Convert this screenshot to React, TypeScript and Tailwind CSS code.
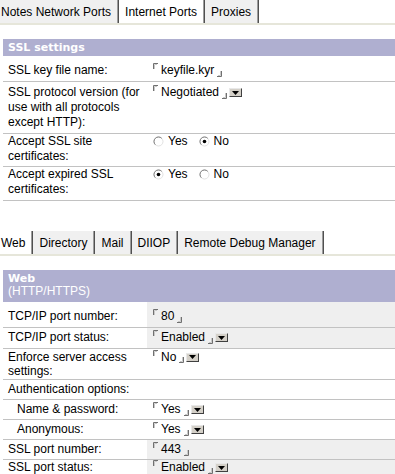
import * as React from "react";

function Tabs({ tabs, active }: { tabs: string[]; active: number }) {
  return (
    <div className="border-b-2 border-[#e6e6da]">
      <div className="-ml-[5px] flex h-[23px] items-stretch">
        {tabs.map((t, i) => (
          <div
            key={t}
            className={
              "mr-px flex items-center border-r border-r-[#9c9c9c] px-[6px] pt-px shadow-[1px_0_0_#505050] " +
              (i === active ? "bg-white" : "bg-[#f0f0f0]")
            }
          >
            {t}
          </div>
        ))}
      </div>
    </div>
  );
}

function MarkStart() {
  return (
    <svg width="5" height="6" viewBox="0 0 5 6" className="mr-[3px] shrink-0">
      <path d="M0.5 6V0.5H5" fill="none" stroke="#707070" />
      <path d="M1.5 6V1.5H4" fill="none" stroke="#c8c8c8" />
    </svg>
  );
}

function MarkEnd() {
  return (
    <svg width="5" height="6" viewBox="0 0 5 6" className="mb-px ml-[3px] shrink-0 self-end">
      <path d="M4.5 0V5.5H0" fill="none" stroke="#707070" />
      <path d="M3.5 0V4.5H1" fill="none" stroke="#c8c8c8" />
    </svg>
  );
}

function Drop() {
  return (
    <span className="ml-[2px] flex h-[9px] w-[13px] shrink-0 items-center justify-center self-center border border-[#404040] border-l-[#e8e8e8] border-t-[#e8e8e8] bg-[#d4d0c8]">
      <svg width="7" height="4" viewBox="0 0 7 4">
        <path d="M0 0H7L3.5 4Z" fill="#000" />
      </svg>
    </span>
  );
}

function Field({ value, drop }: { value: string; drop?: boolean }) {
  return (
    <div className="flex items-start">
      <MarkStart />
      <span>{value}</span>
      <MarkEnd />
      {drop ? <Drop /> : null}
    </div>
  );
}

function Radio({ checked }: { checked?: boolean }) {
  return (
    <svg width="11" height="11" viewBox="0 0 11 11" className="shrink-0">
      <circle cx="5.5" cy="5.5" r="4.5" fill="#fff" stroke="#e2e2e2" />
      <path d="M2.3 8.7A4.5 4.5 0 0 1 8.7 2.3" fill="none" stroke="#7c7c7c" />
      {checked ? <circle cx="5.5" cy="5.5" r="1.8" fill="#000" /> : null}
    </svg>
  );
}

function YesNo({ yes }: { yes: boolean }) {
  return (
    <div className="flex items-center">
      <Radio checked={yes} />
      <span className="ml-[4px]">Yes</span>
      <span className="ml-[11px]">
        <Radio checked={!yes} />
      </span>
      <span className="ml-[4px]">No</span>
    </div>
  );
}

interface RowProps {
  label: string;
  h: string;
  pad: string;
  lh?: string;
  gray?: boolean;
  indent?: boolean;
  children?: React.ReactNode;
}

function Row({ label, h, pad, lh = "leading-[15px]", gray, indent, children }: RowProps) {
  return (
    <div className={"flex border-b border-[#c2c2c2] " + h}>
      <div className={"w-[144px] shrink-0 " + pad + " " + lh + " " + (indent ? "pl-[14px]" : "pl-[5px]")}>
        {label}
      </div>
      <div className={"flex-1 pl-[6px] " + pad + " " + lh + " " + (gray ? "bg-[#efefef]" : "")}>
        {children}
      </div>
    </div>
  );
}

export default function App() {
  return (
    <div className="h-[474px] w-[395px] overflow-hidden bg-white font-['Liberation_Sans',Arial,sans-serif] text-[12px] text-black">
      <Tabs tabs={["Notes Network Ports", "Internet Ports", "Proxies"]} active={1} />

      <div className="ml-[3px] mt-[14px]">
        <div className="h-[17px] bg-[#afafd0] pl-[5px] pt-px font-['DejaVu_Sans',sans-serif] text-[11px] font-bold leading-[16px] text-white">
          SSL settings
        </div>
        <Row label="SSL key file name:" h="h-[26px]" pad="pt-[7px]">
          <Field value="keyfile.kyr" />
        </Row>
        <Row label="SSL protocol version (for use with all protocols except HTTP):" h="h-[52px]" pad="pt-[3px]">
          <Field value="Negotiated" drop />
        </Row>
        <Row label="Accept SSL site certificates:" h="h-[33px]" pad="pt-0">
          <YesNo yes={false} />
        </Row>
        <Row label="Accept expired SSL certificates:" h="h-[34px]" pad="pt-0">
          <YesNo yes />
        </Row>
      </div>

      <div className="mt-[30px]">
        <Tabs tabs={["Web", "Directory", "Mail", "DIIOP", "Remote Debug Manager"]} active={0} />
      </div>

      <div className="ml-[3px] mt-[14px]">
        <div className="h-[32px] bg-[#afafd0] pl-[5px] pt-[3px] text-white">
          <div className="font-['DejaVu_Sans',sans-serif] text-[11px] font-bold leading-[12px]">Web</div>
          <div className="leading-[12px]">(HTTP/HTTPS)</div>
        </div>
        <Row label="TCP/IP port number:" h="h-[26px]" pad="pt-[7px]" gray>
          <Field value="80" />
        </Row>
        <Row label="TCP/IP port status:" h="h-[21px]" pad="pt-[2px]" gray>
          <Field value="Enabled" drop />
        </Row>
        <Row label="Enforce server access settings:" h="h-[31px]" pad="pt-px" lh="leading-[14px]">
          <Field value="No" drop />
        </Row>
        <Row label="Authentication options:" h="h-[20px]" pad="pt-[2px]" />
        <Row label="Name & password:" h="h-[20px]" pad="pt-[2px]" indent>
          <Field value="Yes" drop />
        </Row>
        <Row label="Anonymous:" h="h-[20px]" pad="pt-[2px]" indent>
          <Field value="Yes" drop />
        </Row>
        <Row label="SSL port number:" h="h-[20px]" pad="pt-[2px]" gray>
          <Field value="443" />
        </Row>
        <Row label="SSL port status:" h="h-[20px]" pad="pt-0" gray>
          <Field value="Enabled" drop />
        </Row>
      </div>
    </div>
  );
}
